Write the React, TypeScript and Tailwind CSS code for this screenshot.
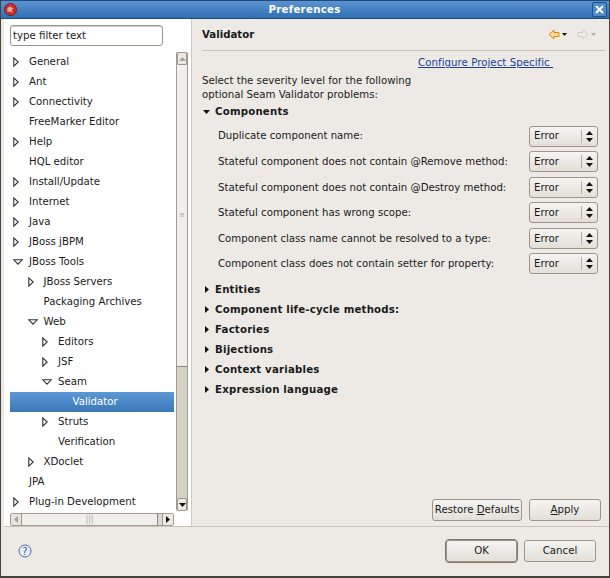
import React from "react";

const tree: [string, number, "c" | "o" | "n", boolean?][] = [
  ["General", 0, "c"], ["Ant", 0, "c"], ["Connectivity", 0, "c"], ["FreeMarker Editor", 0, "n"], ["Help", 0, "c"],
  ["HQL editor", 0, "n"], ["Install/Update", 0, "c"], ["Internet", 0, "c"], ["Java", 0, "c"], ["JBoss jBPM", 0, "c"],
  ["JBoss Tools", 0, "o"], ["JBoss Servers", 1, "c"], ["Packaging Archives", 1, "n"], ["Web", 1, "o"], ["Editors", 2, "c"],
  ["JSF", 2, "c"], ["Seam", 2, "o"], ["Validator", 3, "n", true], ["Struts", 2, "c"], ["Verification", 2, "n"],
  ["XDoclet", 1, "c"], ["JPA", 0, "n"], ["Plug-in Development", 0, "c"],
];
const pads = ["pl-[0px]", "pl-[14.5px]", "pl-[29px]", "pl-[43.5px]"];
const sel = ["Duplicate component name:", "Stateful component does not contain @Remove method:", "Stateful component does not contain @Destroy method:", "Stateful component has wrong scope:", "Component class name cannot be resolved to a type:", "Component class does not contain setter for property:"];
const sections = ["Entities", "Component life-cycle methods:", "Factories", "Bijections", "Context variables", "Expression language"];

function Twisty({ k }: { k: string }) {
  return (
    <span className="w-[19px] h-5 shrink-0 flex items-center justify-start pl-[3px]">
      {k === "c" && <svg width="6" height="10" viewBox="0 0 6 10"><path d="M0.8 0.8 L5.2 5 L0.8 9.2 Z" fill="#fff" stroke="#333" strokeWidth="1.1" /></svg>}
      {k === "o" && <svg width="10" height="6" viewBox="0 0 10 6"><path d="M0.8 0.8 L9.2 0.8 L5 5.2 Z" fill="#fff" stroke="#333" strokeWidth="1.1" /></svg>}
    </span>
  );
}
function Arrow({ open }: { open?: boolean }) {
  return open
    ? <svg width="7" height="4" viewBox="0 0 7 4"><path d="M0 0 H7 L3.5 4 Z" fill="#111" /></svg>
    : <svg width="4" height="7" viewBox="0 0 4 7"><path d="M0 0 V7 L4 3.5 Z" fill="#111" /></svg>;
}
function Btn({ children, w, def }: { children: React.ReactNode; w: string; def?: boolean }) {
  return (
    <div className={`${w} h-[22px] flex items-center justify-center whitespace-nowrap rounded-[3px] border border-[#9d9589] bg-gradient-to-b from-[#f6f4f1] to-[#e3dfd8] text-[#1a1a1a] ${def ? "outline outline-1 outline-[#7d766c]" : ""}`}>{children}</div>
  );
}
function Combo() {
  return (
    <div className="w-[69px] h-[21px] shrink-0 flex items-center rounded-[3px] border border-[#9d9589] bg-gradient-to-b from-[#f6f4f1] to-[#e3dfd8] pl-[4px] text-[#1a1a1a]">
      <span className="flex-1">Error</span>
      <span className="w-px h-[13px] bg-[#b5afa5]" />
      <span className="w-[15px] flex justify-center">
        <svg width="7" height="11" viewBox="0 0 7 11"><path d="M3.5 0 L7 4 H0 Z M3.5 11 L0 7 H7 Z" fill="#111" /></svg>
      </span>
    </div>
  );
}
function ScrollEnd({ dir }: { dir: "u" | "d" }) {
  return (
    <div className="h-[13px] bg-[#ece9e4] border border-[#9d9589] rounded-[2px] flex items-center justify-center shrink-0">
      <svg width="7" height="4" viewBox="0 0 7 4"><path d={dir === "u" ? "M3.5 0 L7 4 H0 Z" : "M0 0 H7 L3.5 4 Z"} fill={dir === "u" ? "#a9a499" : "#111"} /></svg>
    </div>
  );
}

export default function App() {
  return (
    <div className="w-[610px] h-[578px] flex flex-col bg-[#edeae5] border border-[#45423d] border-t-0 border-b-2 text-[10.2px] text-[#1a1a1a] overflow-hidden" style={{ fontFamily: '"DejaVu Sans", sans-serif' }}>
      <div className="h-[19px] shrink-0 flex items-center justify-between pl-[3px] pr-[2px] bg-gradient-to-b from-[#5b93cf] to-[#2f6fb3] border-t border-b border-[#1f4a7a]">
        <svg width="13" height="13" viewBox="0 0 13 13"><circle cx="6.5" cy="6.5" r="6" fill="#c8302c" stroke="#6e1512" strokeWidth="0.8" /><path d="M3.5 5 L6 3.5 L9.5 5.5 L7.5 7 L9 9.5 L5.5 8.5 L3.5 9 Z" fill="#eda9a0" /></svg>
        <span className="font-bold text-white tracking-[0.3px] pt-[1px]">Preferences</span>
        <div className="w-[15px] h-[15px] rounded-[2px] border border-[#204f85] bg-[#4f8ac8] flex items-center justify-center">
          <svg width="9" height="9" viewBox="0 0 9 9"><path d="M1 1 L8 8 M8 1 L1 8" stroke="#fff" strokeWidth="2" /></svg>
        </div>
      </div>
      <div className="flex-1 flex min-h-0 pl-[3px]">
        <div className="w-[188px] shrink-0 bg-white border-r border-[#cfcac1] flex flex-col">
          <div className="pt-[6px] pl-[6px] pr-[28px] pb-[6px]">
            <div className="h-[21px] flex items-center border border-[#9d9589] rounded-[3px] pl-[2px] text-[#222] shadow-[inset_0_1px_1px_#ccc]">type filter text</div>
          </div>
          <div className="flex-1 min-h-0 flex pl-[6px] pr-[3px]">
            <div className="flex-1 min-w-0 flex flex-col">
              <div className="flex-1">
                {tree.map(([t, d, k, s]) => (
                  <div key={t} className={`h-5 flex items-center ${pads[d]} ${s ? "bg-gradient-to-b from-[#5c98d4] to-[#3a78b8] text-white" : ""}`}>
                    <Twisty k={k} />
                    <span className="whitespace-nowrap">{t}</span>
                  </div>
                ))}
              </div>
              <div className="h-[13px] flex border border-[#a39c90] rounded-[2px] bg-[#ded9d0]">
                <div className="w-[11px] border-r border-[#a39c90] flex items-center justify-center bg-[#e8e5df]"><svg width="4" height="7" viewBox="0 0 4 7"><path d="M4 0 V7 L0 3.5 Z" fill="#a9a499" /></svg></div>
                <div className="w-[136px] bg-[#f1efeb] border-r border-[#8f887c] flex items-center justify-center text-[#aaa] text-[8px] leading-none">|||</div>
                <div className="flex-1" />
                <div className="w-[11px] border-l border-[#a39c90] flex items-center justify-center bg-[#ece9e4]"><svg width="4" height="7" viewBox="0 0 4 7"><path d="M0 0 V7 L4 3.5 Z" fill="#111" /></svg></div>
              </div>
            </div>
            <div className="w-[12px] ml-[2px] mb-[15px] flex flex-col border-x border-[#a39c90] bg-[#d6d1c7] rounded-[2px]">
              <ScrollEnd dir="u" />
              <div className="h-[302px] bg-[#f1efeb] border-b border-[#8f887c] flex items-center justify-center text-[#aaa] text-[7px] leading-none">≡</div>
              <div className="flex-1" />
              <ScrollEnd dir="d" />
            </div>
          </div>
        </div>
        <div className="flex-1 min-w-0 flex flex-col pl-[10px] pr-[8px]">
          <div className="h-[32px] shrink-0 flex items-center justify-between border-b border-[#c9c4ba] -mr-[4px]">
            <span className="font-bold">Validator</span>
            <div className="flex items-center gap-[10px] pr-[9px]">
              <span className="flex items-center gap-[2px]">
                <svg width="12" height="11" viewBox="0 0 12 11"><path d="M1 5.5 L6 1 V3.5 H11 V7.5 H6 V10 Z" fill="#fbd98b" stroke="#d98a20" /></svg>
                <svg width="5" height="3" viewBox="0 0 5 3"><path d="M0 0 H5 L2.5 3 Z" fill="#111" /></svg>
              </span>
              <span className="flex items-center gap-[2px]">
                <svg width="12" height="11" viewBox="0 0 12 11"><path d="M11 5.5 L6 1 V3.5 H1 V7.5 H6 V10 Z" fill="#eeece8" stroke="#d0ccc4" /></svg>
                <svg width="5" height="3" viewBox="0 0 5 3"><path d="M0 0 H5 L2.5 3 Z" fill="#b5b0a6" /></svg>
              </span>
            </div>
          </div>
          <div className="flex justify-end pr-[48px] h-[15px] mt-[4px] shrink-0 leading-[15px]">
            <span className="text-[#1c3f9c] underline whitespace-pre tracking-[0.05px]">Configure Project Specific </span>
          </div>
          <div className="mt-[4px] leading-[14px] shrink-0">
            <div>Select the severity level for the following</div>
            <div>optional Seam Validator problems:</div>
          </div>
          <div className="h-5 flex items-center gap-[5px] font-bold tracking-[0.2px] shrink-0"><span className="w-[7px] ml-[1px] flex justify-center"><Arrow open /></span>Components</div>
          <div className="pl-[16px] pr-[3px] mt-[3.5px] flex flex-col gap-[4.6px] shrink-0">
            {sel.map((s) => (
              <div key={s} className="h-[21px] flex items-center justify-between"><span className="whitespace-nowrap">{s}</span><Combo /></div>
            ))}
          </div>
          <div className="mt-[5.5px] flex flex-col shrink-0">
            {sections.map((s) => (
              <div key={s} className="h-5 flex items-center gap-[5px] font-bold tracking-[0.2px]"><span className="w-[7px] ml-[1px] flex justify-center"><Arrow /></span>{s}</div>
            ))}
          </div>
          <div className="flex-1" />
          <div className="flex justify-end gap-[7px] mb-[5px] shrink-0">
            <Btn w="w-[90px]"><span>Restore <u>D</u>efaults</span></Btn>
            <Btn w="w-[72px]"><span><u>A</u>pply</span></Btn>
          </div>
        </div>
      </div>
      <div className="h-[50px] shrink-0 border-t border-[#c9c4ba] ml-[3px] pb-[2px] flex items-center justify-between pl-[14px] pr-[13px]">
        <svg width="14" height="14" viewBox="0 0 14 14"><circle cx="7" cy="7" r="6" fill="#e8eef8" stroke="#4a6fa8" /><text x="7" y="10.5" fontSize="10" textAnchor="middle" fill="#3a5f98" fontFamily="DejaVu Sans">?</text></svg>
        <div className="flex gap-[7px]">
          <Btn w="w-[71px]" def>OK</Btn>
          <Btn w="w-[72px]">Cancel</Btn>
        </div>
      </div>
    </div>
  );
}
